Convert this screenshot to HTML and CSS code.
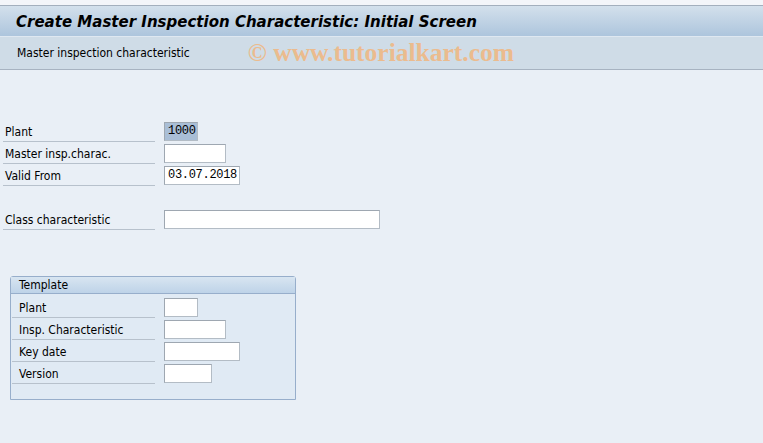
FILE: index.html
```html
<!DOCTYPE html>
<html lang="en">
<head>
  <meta charset="UTF-8">
  <title>Create Master Inspection Characteristic: Initial Screen</title>
  <link rel="stylesheet" href="styles.css">
</head>
<body>
<div id="screen">
  <div class="top-strip"></div>
  <div class="title-bar">
    <h1>Create Master Inspection Characteristic: Initial Screen</h1>
  </div>
  <div class="toolbar">
    <span class="tool-item">Master inspection characteristic</span>
    <span class="watermark">&copy; www.tutorialkart.com</span>
  </div>

  <div class="content">
    <div class="row">
      <label class="field-label">Plant</label>
      <span class="field w4 selected">1000</span>
    </div>
    <div class="row">
      <label class="field-label">Master insp.charac.</label>
      <span class="field w8"></span>
    </div>
    <div class="row">
      <label class="field-label">Valid From</label>
      <span class="field w10">03.07.2018</span>
    </div>
    <div class="row blank"></div>
    <div class="row">
      <label class="field-label">Class characteristic</label>
      <span class="field w30"></span>
    </div>

    <div class="group">
      <div class="group-title">Template</div>
      <div class="group-body">
        <div class="row">
          <label class="field-label">Plant</label>
          <span class="field w4"></span>
        </div>
        <div class="row">
          <label class="field-label">Insp. Characteristic</label>
          <span class="field w8"></span>
        </div>
        <div class="row">
          <label class="field-label">Key date</label>
          <span class="field w10"></span>
        </div>
        <div class="row">
          <label class="field-label">Version</label>
          <span class="field w6"></span>
        </div>
      </div>
    </div>
  </div>
</div>
</body>
</html>
```

FILE: styles.css
```css
body {
    margin: 0;
    padding: 0;
    font-family: "DejaVu Sans Condensed", "DejaVu Sans", sans-serif;
    font-size: 12px;
    color: #000;
    background-color: #e9eff6;
}

#screen {
    width: 763px;
    height: 443px;
    overflow: hidden;
}

.top-strip {
    height: 5px;
    background-color: #f3f5f9;
    border-bottom: 1px solid #a3afbd;
}

.title-bar {
    height: 30px;
    display: flex;
    align-items: center;
    padding-left: 16px;
    background: linear-gradient(#d3e0ec, #adc5dd);
    border-bottom: 1px solid #dfe8f1;
}

.title-bar h1 {
    margin: 0;
    font-size: 16.7px;
    font-weight: bold;
    font-style: italic;
    color: #000;
}

.toolbar {
    height: 32px;
    display: flex;
    align-items: center;
    padding-left: 17px;
    background-color: #cfdce7;
    border-bottom: 1px solid #a7b3c1;
}

.watermark {
    margin-left: 58px;
    font-family: "Liberation Serif", serif;
    font-weight: bold;
    font-size: 25.5px;
    color: #ebbb8e;
}

.content {
    padding-top: 50px;
}

.row {
    display: flex;
    align-items: center;
    height: 22px;
}

.field-label {
    box-sizing: border-box;
    width: 152px;
    height: 22px;
    margin-left: 3px;
    padding: 5px 0 0 2px;
    border-bottom: 1px solid #b7c1cc;
}

.field {
    box-sizing: border-box;
    height: 19px;
    margin-left: 9px;
    padding: 1px 0 0 3px;
    background-color: #fff;
    border: 1px solid #b3bcc5;
    border-top-color: #9ea7b1;
    border-left-color: #9ea7b1;
    font-family: "Liberation Mono", monospace;
    font-size: 12px;
    letter-spacing: -0.3px;
}

.field.selected {
    background-color: #a9bed6;
}

.w4 { width: 34px; }
.w6 { width: 48px; }
.w8 { width: 62px; }
.w10 { width: 76px; }
.w30 { width: 216px; }

.group {
    width: 284px;
    height: 122px;
    margin: 46px 0 0 10px;
    border: 1px solid #97aecb;
    border-radius: 3px 3px 0 0;
    background-color: #e0eaf4;
}

.group-title {
    height: 16px;
    padding-left: 8px;
    line-height: 17px;
    background: linear-gradient(#d8e5f1, #bed3e8);
    border-bottom: 1px solid #97aecb;
}

.group-body {
    padding-top: 2px;
}

.group-body .field-label {
    margin-left: 1px;
    width: 143px;
    padding-left: 7px;
}

.group-body .field {
    margin-left: 9px;
}
```
